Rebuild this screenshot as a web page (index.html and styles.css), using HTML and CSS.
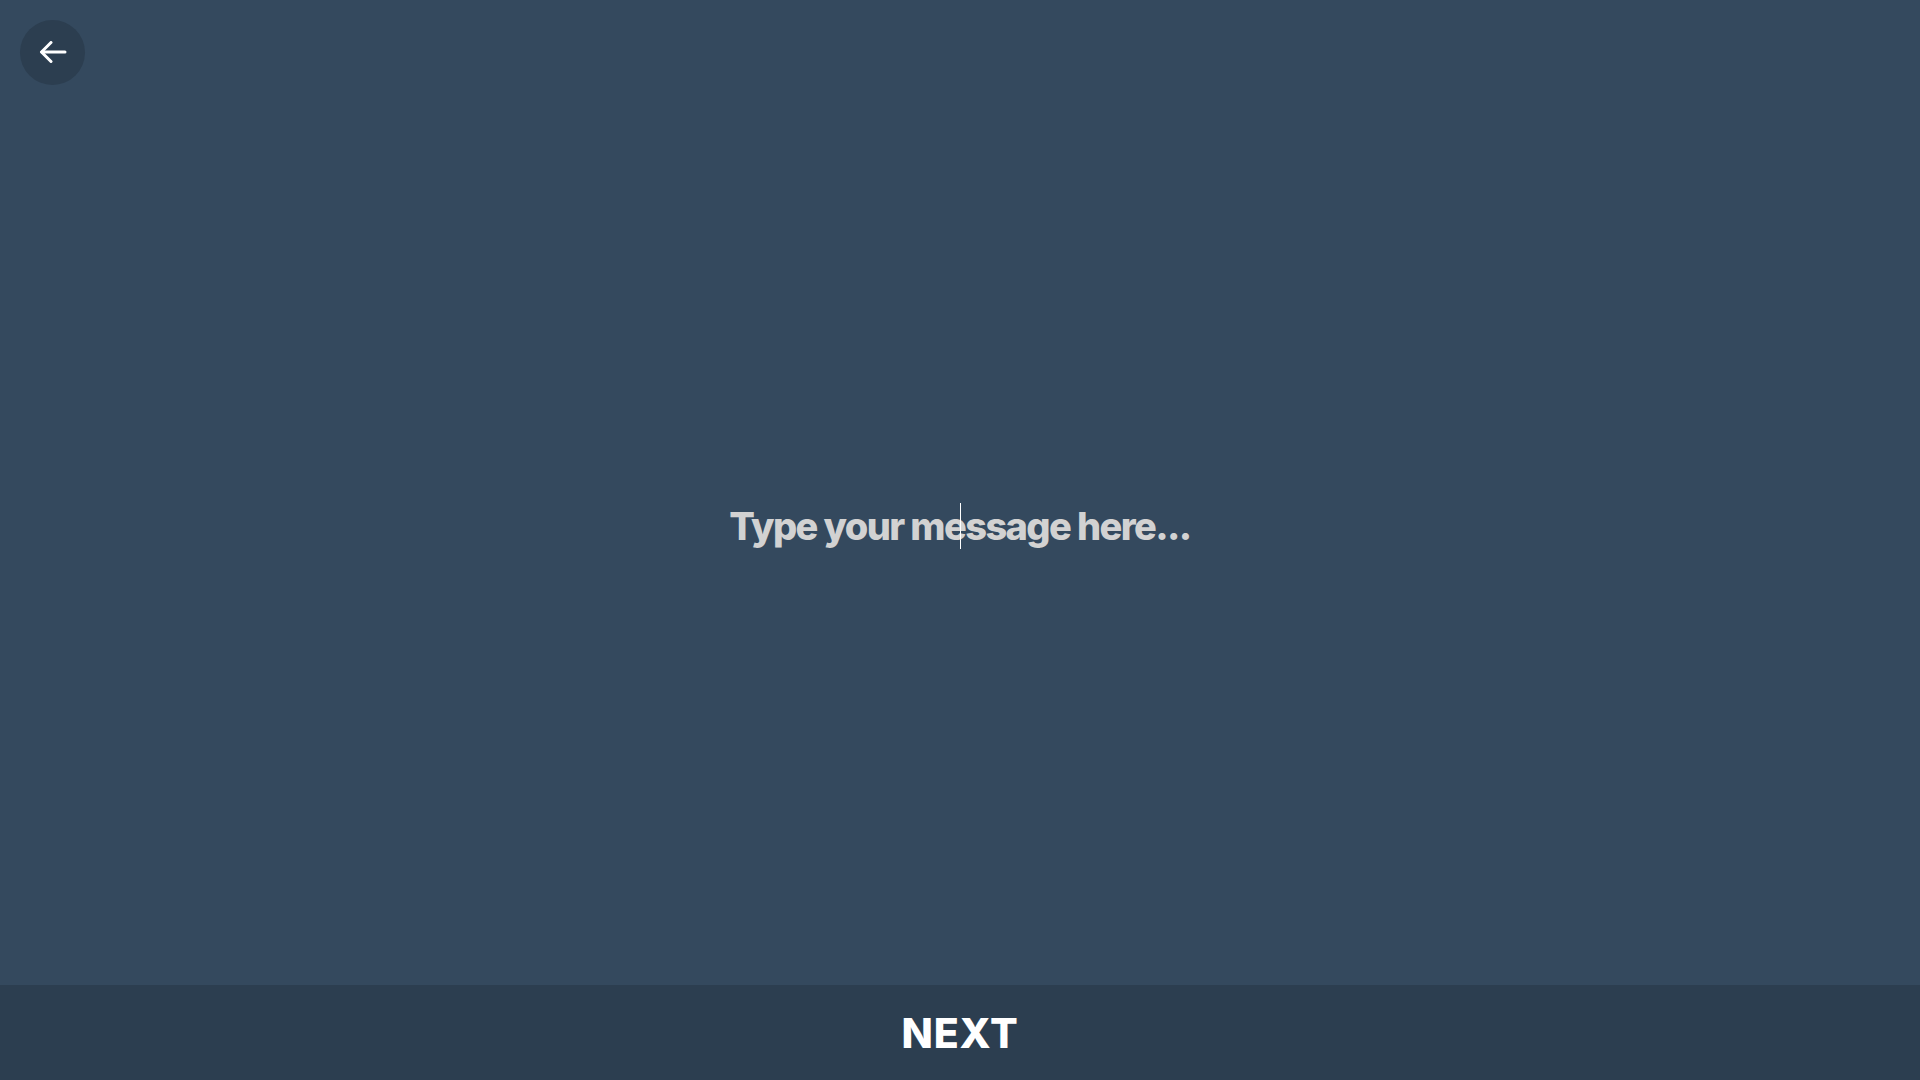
FILE: index.html
```html
<!DOCTYPE html>
<html lang="en">
<head>
<meta charset="utf-8">
<title>Message</title>
<link rel="stylesheet" href="styles.css">
</head>
<body>
<div class="screen">
  <header class="top">
    <button class="back" aria-label="Back">
      <svg width="28" height="24" viewBox="0 0 28 24" fill="none" stroke="#ffffff" stroke-width="3" stroke-linecap="round" stroke-linejoin="round">
        <path d="M26 11H3"/>
        <path d="M12 1.5L2.5 11L12 20.5"/>
      </svg>
    </button>
  </header>
  <main class="stage">
    <div class="field">
      <span class="placeholder">Type your message here...</span>
      <span class="caret"></span>
    </div>
  </main>
  <footer class="bar">
    <span class="next">NEXT</span>
  </footer>
</div>
</body>
</html>
```
FILE: styles.css
```css
* { box-sizing: border-box; }
html, body { margin: 0; height: 100%; }
body {
  background: #34495e;
  font-family: "Inter", "Liberation Sans", sans-serif;
}
.screen {
  height: 1080px;
  display: flex;
  flex-direction: column;
}
.top {
  padding: 20px 0 0 20px;
  height: 0;
}
.back {
  width: 65px;
  height: 65px;
  border-radius: 50%;
  border: none;
  background: #2c3e50;
  display: flex;
  align-items: center;
  justify-content: center;
  padding: 0;
}
.stage {
  flex: 1;
  display: flex;
  align-items: center;
  justify-content: center;
  padding-top: 46px;
}
.field {
  position: relative;
  display: flex;
}
.placeholder {
  color: #d2d2d2;
  font-size: 38px;
  font-weight: 800;
  letter-spacing: -1.6px;
  line-height: 46px;
}
.caret {
  position: absolute;
  left: 50%;
  top: 0;
  width: 1px;
  height: 46px;
  background: #ffffff;
}
.bar {
  height: 95px;
  background: #2c3e50;
  display: flex;
  align-items: center;
  justify-content: center;
}
.next {
  color: #ffffff;
  font-size: 41px;
  font-weight: 800;
  letter-spacing: 0.8px;
}
```
